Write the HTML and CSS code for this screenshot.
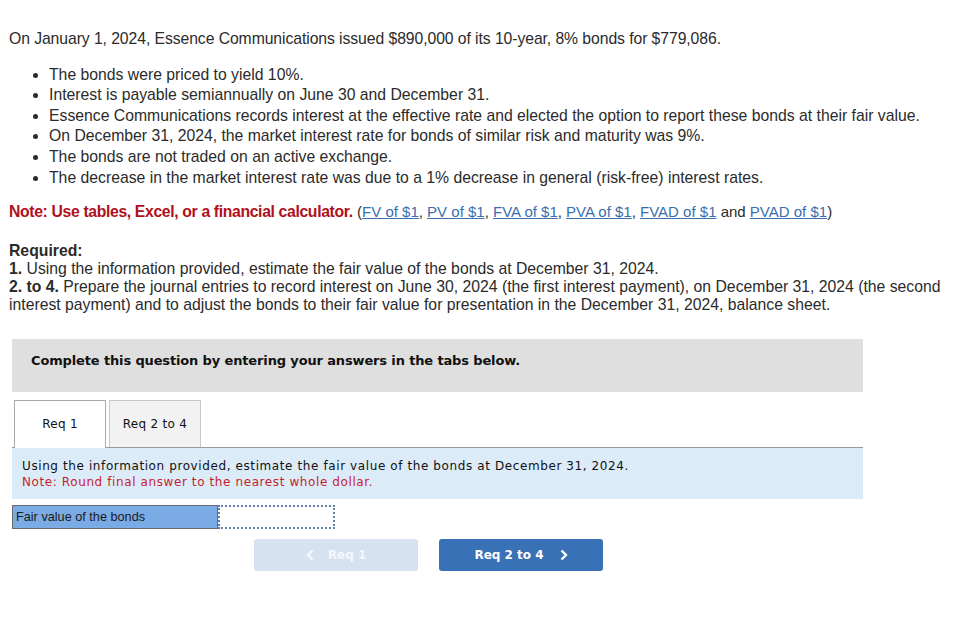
FILE: index.html
```html
<!DOCTYPE html>
<html>
<head>
<meta charset="utf-8">
<link rel="stylesheet" href="styles.css">
</head>
<body>
<div class="question">
  <p class="intro">On January 1, 2024, Essence Communications issued $890,000 of its 10-year, 8% bonds for $779,086.</p>
  <ul class="facts">
    <li>The bonds were priced to yield 10%.</li>
    <li>Interest is payable semiannually on June 30 and December 31.</li>
    <li>Essence Communications records interest at the effective rate and elected the option to report these bonds at their fair value.</li>
    <li>On December 31, 2024, the market interest rate for bonds of similar risk and maturity was 9%.</li>
    <li>The bonds are not traded on an active exchange.</li>
    <li>The decrease in the market interest rate was due to a 1% decrease in general (risk-free) interest rates.</li>
  </ul>
  <p class="note"><span class="note-red">Note: Use tables, Excel, or a financial calculator.</span> <span class="links">(<a href="#">FV of $1</a>, <a href="#">PV of $1</a>, <a href="#">FVA of $1</a>, <a href="#">PVA of $1</a>, <a href="#">FVAD of $1</a> and <a href="#">PVAD of $1</a>)</span></p>
  <div class="required">
    <div class="req-title">Required:</div>
    <div><span class="num">1.</span> Using the information provided, estimate the fair value of the bonds at December 31, 2024.</div>
    <div><span class="num">2. to 4.</span> Prepare the journal entries to record interest on June 30, 2024 (the first interest payment), on December 31, 2024 (the second interest payment) and to adjust the bonds to their fair value for presentation in the December 31, 2024, balance sheet.</div>
  </div>
</div>

<div class="work">
  <div class="banner">Complete this question by entering your answers in the tabs below.</div>
  <div class="tabs">
    <div class="tab active">Req 1</div>
    <div class="tab">Req 2 to 4</div>
  </div>
  <div class="info">
    <div>Using the information provided, estimate the fair value of the bonds at December 31, 2024.</div>
    <div class="info-note">Note: Round final answer to the nearest whole dollar.</div>
  </div>
  <div class="answer-row">
    <div class="answer-label">Fair value of the bonds</div>
    <div class="answer-input"></div>
  </div>
  <div class="nav">
    <div class="btn prev"><svg class="chev" width="8" height="12" viewBox="0 0 8 12"><path d="M6.5 1.5 L2 6 L6.5 10.5" fill="none" stroke="currentColor" stroke-width="2.4"/></svg><span>Req 1</span></div>
    <div class="btn next"><span>Req 2 to 4</span><svg class="chev right" width="8" height="12" viewBox="0 0 8 12"><path d="M1.5 1.5 L6 6 L1.5 10.5" fill="none" stroke="currentColor" stroke-width="2.4"/></svg></div>
  </div>
</div>
</body>
</html>
```

FILE: styles.css
```css
html, body {
  margin: 0;
  padding: 0;
  background: #fff;
}
body {
  padding: 29px 8px 0 9px;
  font-family: "Liberation Sans", Arial, sans-serif;
  color: #2b2b2b;
}
.question {
  font-size: 15.75px;
}
.intro {
  margin: 0;
  line-height: 20.6px;
  letter-spacing: -0.08px;
}
.facts {
  margin: 15px 0 0 0;
  padding: 0 0 0 40px;
  line-height: 20.6px;
}
.note {
  margin: 14px 0 0 0;
  line-height: 20.6px;
}
.note-red {
  color: #b0101c;
  font-weight: bold;
  letter-spacing: -0.35px;
}
.links {
  font-size: 15px;
}
.note a {
  color: #3a6eae;
  text-decoration: underline;
}
.required {
  margin-top: 19px;
  line-height: 18px;
}
.req-title,
.num {
  font-weight: bold;
}
.work {
  margin: 25px 0 0 3px;
  width: 851px;
}
.banner {
  background: #dfdfdf;
  height: 53px;
  box-sizing: border-box;
  padding: 14px 0 0 19px;
  font-family: "DejaVu Sans", Verdana, sans-serif;
  font-size: 13px;
  font-weight: bold;
  line-height: 16px;
  letter-spacing: -0.14px;
  color: #111;
}
.tabs {
  display: flex;
  gap: 3px;
  margin-top: 8px;
  padding-left: 2px;
  border-bottom: 1px solid #999;
  height: 47px;
}
.tab {
  width: 92px;
  height: 47px;
  box-sizing: border-box;
  border: 1px solid #c8c8c8;
  border-bottom: none;
  background: #f2f2f2;
  display: flex;
  align-items: center;
  justify-content: center;
  font-family: "DejaVu Sans", Verdana, sans-serif;
  font-size: 12px;
  letter-spacing: 0.3px;
  color: #111;
}
.tab.active {
  background: #fff;
  border-color: #a8a8a8;
  height: 48px;
  position: relative;
  z-index: 1;
}
.info {
  background: #dcebf8;
  padding: 10px 10px 9px 10px;
  font-family: "DejaVu Sans", Verdana, sans-serif;
  font-size: 12px;
  line-height: 16px;
  letter-spacing: 0.6px;
  color: #111;
}
.info-note {
  color: #c41f2b;
}
.answer-row {
  display: flex;
  margin-top: 6px;
  height: 24px;
}
.answer-label {
  width: 206px;
  box-sizing: border-box;
  background: #7aabe4;
  border: 1px solid #6b6b6b;
  padding: 4px 0 0 3px;
  font-size: 12.7px;
  line-height: 14px;
  color: #1a1a1a;
}
.answer-input {
  width: 117px;
  box-sizing: border-box;
  border: 2px dotted #5f82ab;
  background: #fff;
}
.nav {
  display: flex;
  gap: 21px;
  margin: 10px 0 0 242px;
}
.btn {
  width: 164px;
  height: 32px;
  border-radius: 3px;
  display: flex;
  align-items: center;
  justify-content: center;
  font-family: "DejaVu Sans", Verdana, sans-serif;
  font-size: 12px;
  font-weight: bold;
  color: #fff;
}
.btn.prev {
  background: #d6e2f0;
  color: #f4f8fc;
}
.btn.next {
  background: #3971b6;
}
.chev {
  display: block;
  margin-right: 14px;
}
.chev.right {
  margin-right: 0;
  margin-left: 16px;
}
```
